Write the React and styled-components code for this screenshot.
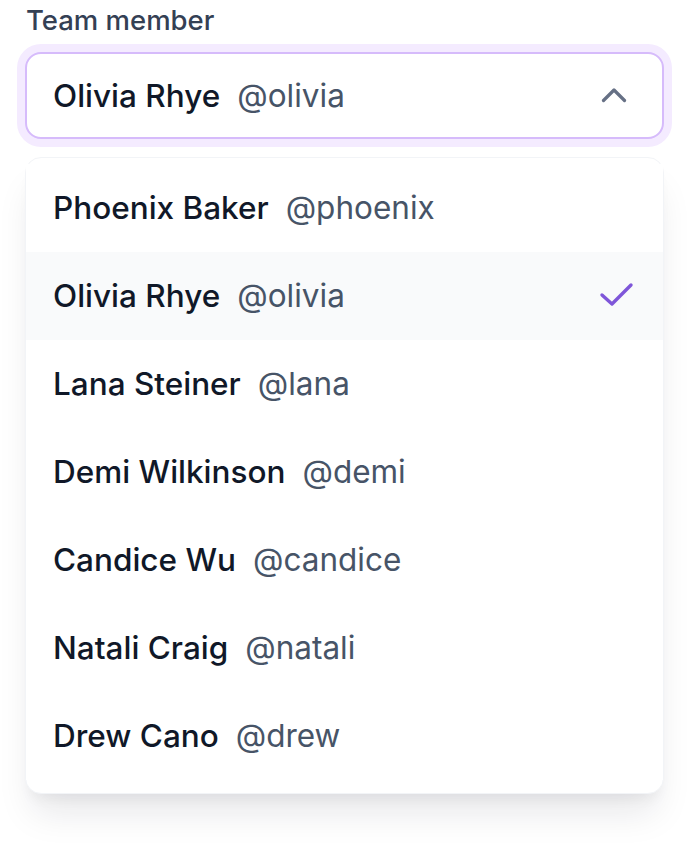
import styled, { createGlobalStyle } from "styled-components";

const GlobalStyle = createGlobalStyle`
  html, body {
    margin: 0;
    min-height: 100%;
    background: #ffffff;
    font-family: Inter, "Noto Sans", sans-serif;
    -webkit-font-smoothing: antialiased;
  }
`;

const Field = styled.div`
  width: 639px;
  padding: 0 0 50px 25px;
`;

const Label = styled.div`
  font-size: 27.5px;
  line-height: 40px;
  font-weight: 500;
  color: #344054;
  margin-bottom: 12px;
  padding-left: 1px;
`;

const SelectBox = styled.div`
  box-sizing: border-box;
  height: 87px;
  display: flex;
  align-items: center;
  justify-content: space-between;
  padding: 0 34px 0 26px;
  border: 2px solid #d6bbfb;
  border-radius: 16px;
  background: #ffffff;
  box-shadow: 0 0 0 8px #f4ebff, 0 2px 4px rgba(16, 24, 40, 0.05);
`;

const Menu = styled.ul`
  box-sizing: border-box;
  list-style: none;
  margin: 18px 0 0;
  padding: 6px 0 13px;
  border: 1px solid #f2f4f7;
  border-radius: 16px;
  background: #ffffff;
  box-shadow: 0 26px 36px -8px rgba(16, 24, 40, 0.1),
    0 10px 14px -6px rgba(16, 24, 40, 0.06);
`;

const Option = styled.li`
  height: 88px;
  display: flex;
  align-items: center;
  justify-content: space-between;
  padding: 0 28px 0 27px;
  background: ${(p) => (p.$selected ? "#f9fafb" : "#ffffff")};
`;

const Person = styled.div`
  display: flex;
  align-items: baseline;
  gap: 17px;
  font-size: 31.5px;
  line-height: 48px;
`;

const Name = styled.span`
  font-weight: 500;
  color: #101828;
`;

const Handle = styled.span`
  font-weight: 400;
  color: #475467;
`;

const Chevron = () => (
  <svg width="28" height="16" viewBox="0 0 28 16" fill="none">
    <path
      d="M3.5 12.5L14 2L24.5 12.5"
      stroke="#667085"
      strokeWidth="3.2"
      strokeLinecap="round"
      strokeLinejoin="round"
    />
  </svg>
);

const Check = () => (
  <svg width="36" height="28" viewBox="0 0 36 28" fill="none">
    <path
      d="M3 13L13 22L32 3"
      stroke="#7f56d9"
      strokeWidth="3.4"
      strokeLinecap="round"
      strokeLinejoin="round"
    />
  </svg>
);

const members = [
  { name: "Phoenix Baker", handle: "@phoenix" },
  { name: "Olivia Rhye", handle: "@olivia" },
  { name: "Lana Steiner", handle: "@lana" },
  { name: "Demi Wilkinson", handle: "@demi" },
  { name: "Candice Wu", handle: "@candice" },
  { name: "Natali Craig", handle: "@natali" },
  { name: "Drew Cano", handle: "@drew" },
];

const selected = "@olivia";

const App = () => {
  const current = members.find((m) => m.handle === selected);
  return (
    <>
      <GlobalStyle />
      <Field>
        <Label>Team member</Label>
        <SelectBox>
          <Person>
            <Name>{current.name}</Name>
            <Handle>{current.handle}</Handle>
          </Person>
          <Chevron />
        </SelectBox>
        <Menu>
          {members.map((m) => (
            <Option key={m.handle} $selected={m.handle === selected}>
              <Person>
                <Name>{m.name}</Name>
                <Handle>{m.handle}</Handle>
              </Person>
              {m.handle === selected && <Check />}
            </Option>
          ))}
        </Menu>
      </Field>
    </>
  );
};

export default App;
